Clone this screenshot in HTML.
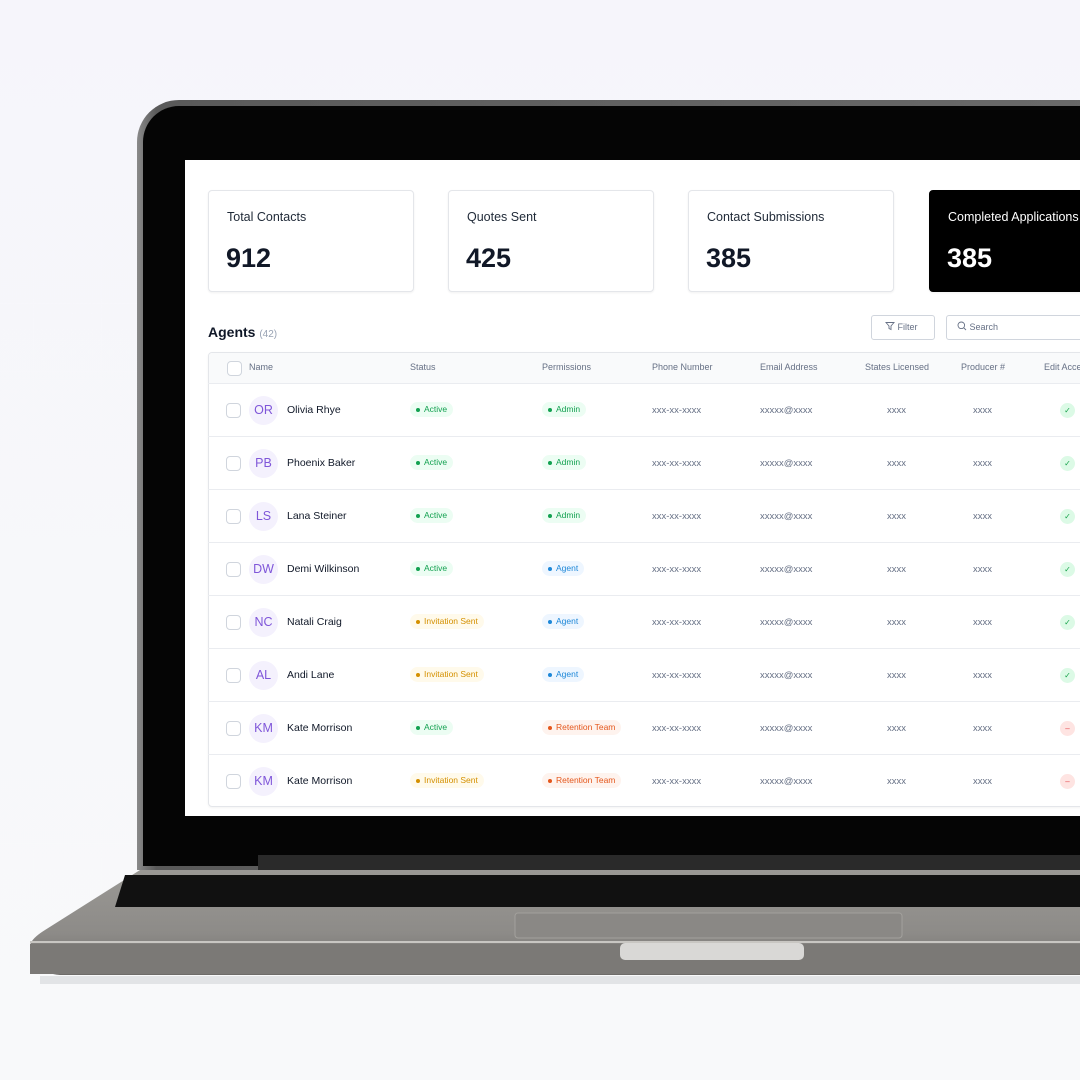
<!DOCTYPE html>
<html><head><meta charset="utf-8"><style>
*{box-sizing:border-box;margin:0;padding:0}
body{width:1080px;height:1080px;overflow:hidden;position:relative;font-family:"Liberation Sans",sans-serif;background:linear-gradient(#f6f5fb,#f7f8fa 60%,#f8f9fa);}
.abs{position:absolute}
.card{position:absolute;top:30px;width:206px;height:102px;border:1px solid #e4e6ea;border-radius:4px;background:#fff;box-shadow:0 1px 2px rgba(0,0,0,.06)}
.card .l{position:absolute;left:18px;top:19px;font-size:12.5px;color:#1f2937}
.card .n{position:absolute;left:17px;top:52px;font-size:27px;font-weight:bold;color:#111827}
.th{position:absolute;top:363px;font-size:9px;color:#667085}
.row{position:absolute;left:0;width:900px;height:53px;border-top:1px solid #eaecf0}
.cb{position:absolute;left:18px;width:15px;height:15px;border:1px solid #d0d5dd;border-radius:4px;background:#fff}
.av{position:absolute;left:41px;top:12px;width:29px;height:29px;border-radius:50%;background:#f4f1fd;color:#7f56d9;font-size:12.5px;text-align:center;line-height:29px}
.nm{position:absolute;left:79px;top:20px;font-size:10.5px;color:#101828}
.pill{position:absolute;top:18px;height:15px;border-radius:8px;font-size:8.5px;line-height:15px;padding:0 6px 0 14px}
.pill:before{content:"";position:absolute;left:6px;top:6px;width:4px;height:4px;border-radius:50%;background:currentColor}
.g{background:#ecfdf3;color:#12a150}
.b{background:#eef6ff;color:#1d87d8}
.o{background:#fffaeb;color:#d49000}
.r{background:#fef3ee;color:#e4571c}
.tx{position:absolute;top:21px;font-size:9.5px;color:#667085}
.ic{position:absolute;left:852px;top:19px;width:15px;height:15px;border-radius:50%;font-size:8px;text-align:center;line-height:15px}
</style></head><body>
<div class="abs" style="left:137px;top:100px;width:980px;height:770px;border-radius:42px 0 0 0;background:linear-gradient(90deg,#8a8a8a,#5a5a5a 2%,#6a6a6a);"></div>
<div class="abs" style="left:143px;top:106px;width:960px;height:760px;border-radius:36px 0 0 0;background:#050505"></div>
<div class="abs" style="left:258px;top:855px;width:830px;height:18px;background:#2a2a2a"></div>
<svg class="abs" style="left:0;top:860px" width="1080" height="130">
<defs><linearGradient id="bg" x1="0" y1="0" x2="0" y2="1"><stop offset="0" stop-color="#9a9894"/><stop offset=".6" stop-color="#8d8b88"/><stop offset="1" stop-color="#6e6c69"/></linearGradient></defs>
<path d="M140 10 L1080 10 L1080 115 L60 115 Q30 112 30 95 L30 85 Q32 78 45 70 Z" fill="url(#bg)"/>
<path d="M30 82 L1080 82" stroke="#c8c6c2" stroke-width="2"/>
<rect x="30" y="84" width="1050" height="30" fill="#7b7976"/>
<path d="M125 15 L1080 15 L1080 47 L115 47 Z" fill="#111"/>
<rect x="515" y="53" width="387" height="25" rx="3" fill="#8a8885" stroke="#a3a19d"/>
<rect x="620" y="83" width="184" height="17" rx="5" fill="#d9d8d6"/>
<rect x="40" y="116" width="1040" height="8" fill="#d4d5d8" opacity=".6"/>
</svg>
<div class="abs" style="left:185px;top:160px;width:895px;height:656px;background:#fff;overflow:hidden">
<div class="card" style="left:23px"><div class="l">Total Contacts</div><div class="n">912</div></div>
<div class="card" style="left:263px"><div class="l">Quotes Sent</div><div class="n">425</div></div>
<div class="card" style="left:503px"><div class="l">Contact Submissions</div><div class="n">385</div></div>
<div class="card" style="left:744px;background:#000;border-color:#000"><div class="l" style="color:#fff;white-space:nowrap">Completed Applications</div><div class="n" style="color:#fff">385</div></div>
<div class="abs" style="left:23px;top:164px;font-size:14px;font-weight:bold;color:#101828">Agents <span style="font-weight:normal;font-size:10px;color:#98a2b3">(42)</span></div>
<div class="abs" style="left:686px;top:155px;width:64px;height:25px;border:1px solid #d0d5dd;border-radius:3px;font-size:9px;color:#667085;line-height:23px;padding-left:13px"><svg width="10" height="10" viewBox="0 0 10 10" style="vertical-align:-1px"><path d="M1 1.5h8L6 5v3.5L4 7.5V5z" fill="none" stroke="#667085" stroke-width=".9"/></svg> Filter</div>
<div class="abs" style="left:761px;top:155px;width:160px;height:25px;border:1px solid #d0d5dd;border-radius:3px;font-size:9px;color:#667085;line-height:23px;padding-left:10px"><svg width="10" height="10" viewBox="0 0 10 10" style="vertical-align:-1px"><circle cx="4.3" cy="4.3" r="3.3" fill="none" stroke="#667085" stroke-width=".9"/><path d="M6.8 6.8L9 9" stroke="#667085" stroke-width=".9"/></svg> Search</div>
<div class="abs" style="left:23px;top:192px;width:900px;height:455px;border:1px solid #e4e6ea;border-radius:4px;overflow:hidden;box-shadow:0 1px 2px rgba(0,0,0,.05)">
<div class="abs" style="left:0;top:0;width:900px;height:31px;background:#f9fafb"></div>
<div class="cb" style="top:8px"></div>
</div>
<div class="abs" style="left:23px;top:192px;width:900px;height:455px">
<div class="th" style="left:41px;top:10px">Name</div>
<div class="th" style="left:202px;top:10px">Status</div>
<div class="th" style="left:334px;top:10px">Permissions</div>
<div class="th" style="left:444px;top:10px">Phone Number</div>
<div class="th" style="left:552px;top:10px">Email Address</div>
<div class="th" style="left:657px;top:10px">States Licensed</div>
<div class="th" style="left:753px;top:10px">Producer #</div>
<div class="th" style="left:836px;top:10px">Edit Access</div>
<div id="rows"></div>
</div>
</div>
<script>
var d=[["OR","Olivia Rhye","g","Active","g","Admin",1],["PB","Phoenix Baker","g","Active","g","Admin",1],["LS","Lana Steiner","g","Active","g","Admin",1],["DW","Demi Wilkinson","g","Active","b","Agent",1],["NC","Natali Craig","o","Invitation Sent","b","Agent",1],["AL","Andi Lane","o","Invitation Sent","b","Agent",1],["KM","Kate Morrison","g","Active","r","Retention Team",0],["KM","Kate Morrison","o","Invitation Sent","r","Retention Team",0]];
var h="";d.forEach(function(r,i){h+='<div class="row" style="top:'+(31+i*53)+'px"><div class="cb" style="top:19px"></div><div class="av">'+r[0]+'</div><div class="nm">'+r[1]+'</div><div class="pill '+r[2]+'" style="left:202px">'+r[3]+'</div><div class="pill '+r[4]+'" style="left:334px">'+r[5]+'</div><div class="tx" style="left:444px">xxx-xx-xxxx</div><div class="tx" style="left:552px">xxxxx@xxxx</div><div class="tx" style="left:679px">xxxx</div><div class="tx" style="left:765px">xxxx</div>'+(r[6]?'<div class="ic" style="background:#dcfae6;color:#17a34a">✓</div>':'<div class="ic" style="background:#fee4e2;color:#e5484d">–</div>')+'</div>'});
document.getElementById("rows").innerHTML=h;
</script>
</body></html>
